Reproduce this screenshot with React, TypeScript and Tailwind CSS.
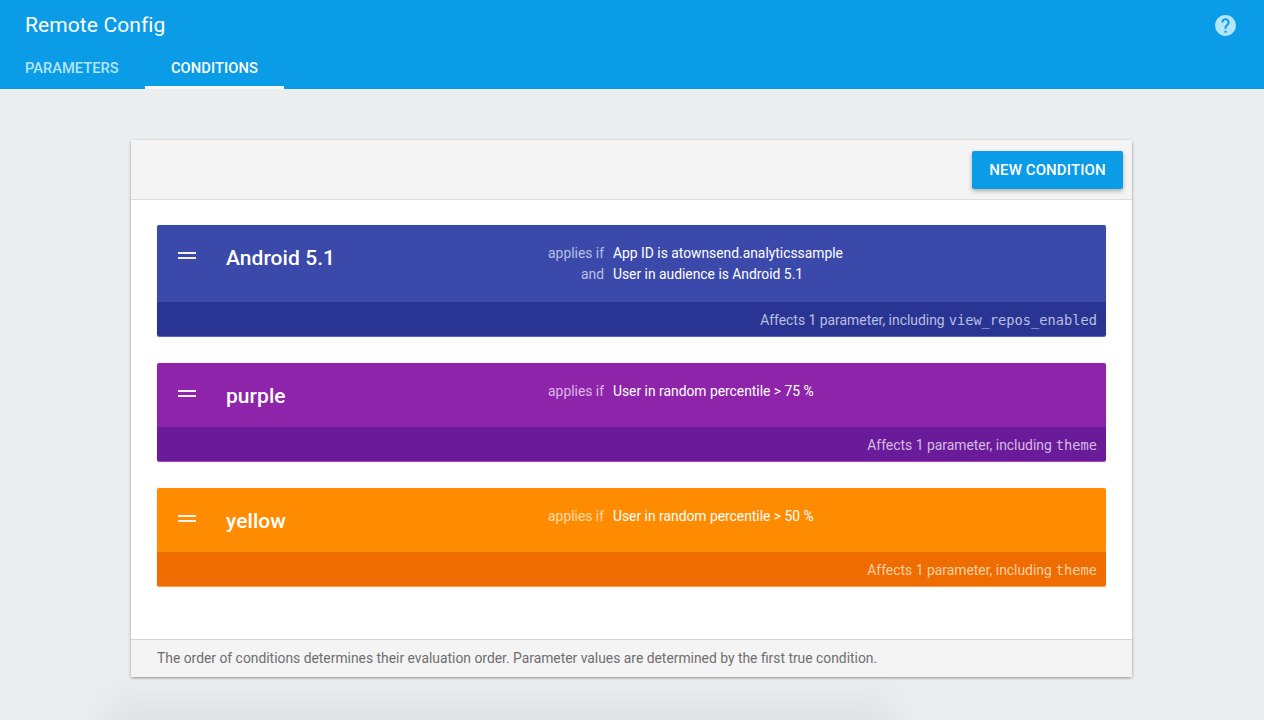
import React from "react";

interface Condition {
  name: string;
  rules: { label: string; text: string }[];
  param: string;
  body: string;
  foot: string;
  edge: string;
  labelColor: string;
  footText: string;
  bodyHeight: string;
}

const conditions: Condition[] = [
  {
    name: "Android 5.1",
    rules: [
      { label: "applies if", text: "App ID is atownsend.analyticssample" },
      { label: "and", text: "User in audience is Android 5.1" },
    ],
    param: "view_repos_enabled",
    body: "bg-[#3b49ab]",
    foot: "bg-[#2a3593]",
    edge: "border-[#5c6bc0]",
    labelColor: "text-[#b9c0e4]",
    footText: "text-[#b9bfe0]",
    bodyHeight: "h-[77px]",
  },
  {
    name: "purple",
    rules: [{ label: "applies if", text: "User in random percentile > 75 %" }],
    param: "theme",
    body: "bg-[#8e24aa]",
    foot: "bg-[#6a1b9a]",
    edge: "border-[#ab47bc]",
    labelColor: "text-[#dcb9e6]",
    footText: "text-[#d5bce2]",
    bodyHeight: "h-[64px]",
  },
  {
    name: "yellow",
    rules: [{ label: "applies if", text: "User in random percentile > 50 %" }],
    param: "theme",
    body: "bg-[#ff8c00]",
    foot: "bg-[#ef6c00]",
    edge: "border-[#ffa040]",
    labelColor: "text-[#ffdcae]",
    footText: "text-[#fbd0a5]",
    bodyHeight: "h-[64px]",
  },
];

const ConditionCard = ({ c }: { c: Condition }) => (
  <div className={`rounded-[2px] overflow-hidden border-b ${c.edge} shadow-[0_0_1px_rgba(0,0,0,0.3)]`}>
    <div className={`${c.body} ${c.bodyHeight} flex text-white`}>
      <div className="w-[69px] shrink-0 pl-[21px] pt-[27px]">
        <div className="w-[18px] h-[2px] bg-[#f1f1f6]" />
        <div className="w-[18px] h-[2px] bg-[#f1f1f6] mt-[3px]" />
      </div>
      <div className="w-[299px] shrink-0 pt-[19px] text-[21px] leading-[28px] font-medium tracking-[0.05px]">{c.name}</div>
      <div className="pt-[18px] text-[13.85px] leading-[21px]">
        {c.rules.map((r) => (
          <div key={r.label} className="flex">
            <span className={`w-[79px] mr-[9px] text-right whitespace-nowrap ${c.labelColor}`}>{r.label}</span>
            <span>{r.text}</span>
          </div>
        ))}
      </div>
    </div>
    <div className={`${c.foot} ${c.footText} h-[34px] flex items-baseline justify-end pr-[9px] pt-[8px] text-[13.9px] leading-[20px]`}>
      <span>Affects 1 parameter, including</span>
      <span className="ml-[4px] font-['DejaVu_Sans_Mono',monospace] text-[13.7px]">{c.param}</span>
    </div>
  </div>
);

export default function App() {
  return (
    <div className="relative w-[1264px] h-[720px] overflow-hidden bg-[#eaeef1] font-['Roboto',sans-serif]">
      <div className="absolute left-[125px] bottom-[-40px] w-[750px] h-[40px] shadow-[0_0_40px_20px_rgba(0,0,0,0.05)]" />

      <header className="relative h-[89px] bg-[#0a9ce6] text-white">
        <div className="flex items-center justify-between h-[50px] pl-[25px] pr-[26px]">
          <h1 className="text-[21px] leading-[50px] tracking-[0.1px]">Remote Config</h1>
          <svg width="25" height="25" viewBox="0 0 24 24" className="text-[#b3e5fc]">
            <path
              fill="currentColor"
              d="M12 2C6.48 2 2 6.48 2 12s4.48 10 10 10 10-4.48 10-10S17.52 2 12 2zm1 17h-2v-2h2v2zm2.07-7.75l-.9.92C13.45 12.9 13 13.5 13 15h-2v-.5c0-1.1.45-2.1 1.17-2.83l1.24-1.26c.37-.36.59-.86.59-1.41 0-1.1-.9-2-2-2s-2 .9-2 2H8c0-2.21 1.79-4 4-4s4 1.79 4 4c0 .88-.36 1.68-.93 2.25z"
            />
          </svg>
        </div>
        <nav className="flex h-[39px] text-[14.7px] font-medium">
          <div className="pl-[25px] w-[145px] pt-[7px] text-[#b3e5fc]">PARAMETERS</div>
          <div className="w-[139px] text-center pt-[7px] border-b-[3px] border-[#f4f6f8] tracking-[0.1px]">CONDITIONS</div>
        </nav>
      </header>

      <main className="relative mt-[51px] ml-[131px] w-[1001px] h-[537px] bg-white rounded-[2px] flex flex-col shadow-[0_1px_3px_rgba(0,0,0,0.4)]">
        <div className="h-[60px] bg-[#f4f4f4] border-b border-[#dcdcdc] flex items-center justify-end pr-[9px] pt-[1px]">
          <button className="w-[151px] h-[38px] bg-[#0a9ce6] text-white text-[15px] font-medium tracking-[0.1px] rounded-[2px] shadow-[0_2px_4px_rgba(0,0,0,0.3)]">
            NEW CONDITION
          </button>
        </div>
        <div className="flex-1 flex flex-col gap-[26px] px-[26px] pt-[25px]">
          {conditions.map((c) => (
            <ConditionCard key={c.name} c={c} />
          ))}
        </div>
        <div className="h-[38px] bg-[#f4f4f4] border-t border-[#d4d4d4] flex items-center pl-[26px] text-[13.87px] text-[#6f6f6f]">
          The order of conditions determines their evaluation order. Parameter values are determined by the first true condition.
        </div>
      </main>
    </div>
  );
}
